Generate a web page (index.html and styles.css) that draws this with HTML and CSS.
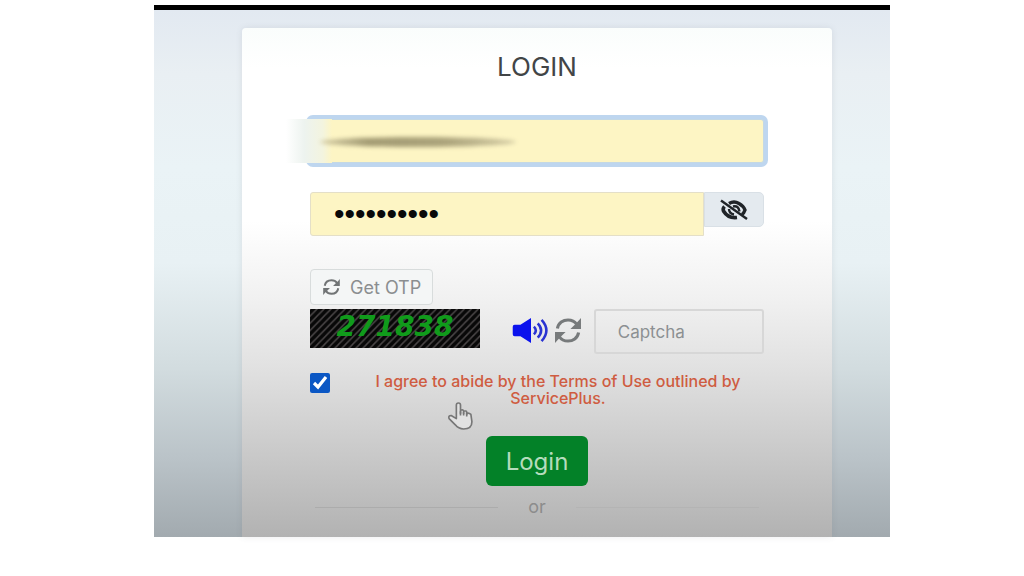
FILE: index.html
```html
<!DOCTYPE html>
<html lang="en">
<head>
<meta charset="utf-8">
<meta name="viewport" content="width=device-width, initial-scale=1">
<title>Login</title>
<link rel="stylesheet" href="styles.css">
</head>
<body>
<svg class="symbols" aria-hidden="true">
  <symbol id="refresh" viewBox="0 0 28 26">
    <path d="M3 11C4 5 9 2 14 2c4 0 7 1.500 9 4.500M25 15c-1 6-6 9-11 9-4 0-7-1.500-9-4.500" fill="none" stroke="currentColor" stroke-width="3.200"/>
    <path d="M27.500 0v11.500H16.500l4-4 4-4zM.500 26V14.500h11l-4 4-4 4z" fill="currentColor"/>
  </symbol>
</svg>
<main class="frame">
  <form class="card">
    <h1 class="title">LOGIN</h1>
    <div class="user-field">
      <input class="field user" type="text" aria-label="User name">
      <span class="fade"></span>
      <span class="smudge"></span>
    </div>
    <div class="password-row">
      <input class="field password" type="password" value="abcdefghij" aria-label="Password">
      <button class="toggle" type="button" aria-label="Show password">
        <svg class="eye" viewBox="0 0 28 22" fill="none" stroke="currentColor">
          <path d="M9 4.500Q14 1.500 19 4.500 23.500 7 25 11q-1 3-3 4.500" stroke-width="3.400"/>
          <path d="M4.500 7.500Q2.500 9.500 3.500 12 8 19.500 17 18.500" stroke-width="3.600"/>
          <path d="M13 7.500q5.500-1.500 6.500 5M9 10q0 4.500 5 5.500" stroke-width="2.400"/>
          <path d="M1 1.500l26 18.500" stroke-width="2.400"/>
        </svg>
      </button>
    </div>
    <button class="otp" type="button"><svg class="otp-icon"><use href="#refresh"/></svg>Get OTP</button>
    <div class="captcha-row">
      <svg class="captcha" viewBox="0 0 170 38" preserveAspectRatio="none" role="img" aria-label="271838">
        <defs><pattern id="hatch" width="7" height="7" patternUnits="userSpaceOnUse"><path d="M-1 1l2-2M0 7l7-7M6 8l2-2" stroke="#4b4748" stroke-width="1.400"/></pattern></defs>
        <rect width="170" height="38" fill="#080808"/>
        <rect width="170" height="38" fill="url(#hatch)"/>
        <text class="digits" x="85" y="26" text-anchor="middle">271838</text>
      </svg>
      <div class="tools">
        <button class="tool" type="button" aria-label="Play captcha">
          <svg class="sound" viewBox="0 0 38 26"><path d="M0 9q0-2 2-2h6l11-7v26L8 19H2q-2 0-2-2z" fill="#0b12ed"/><path d="M22 9q4 4 0 8M26 5.500q7 7.500 0 15M30 2q10 11 0 22" fill="none" stroke="#2933d2" stroke-width="2.600"/></svg>
        </button>
        <button class="tool" type="button" aria-label="New captcha"><svg class="reload"><use href="#refresh"/></svg></button>
      </div>
      <input class="captcha-input" type="text" placeholder="Captcha" aria-label="Captcha">
    </div>
    <div class="terms">
      <input class="check" type="checkbox" id="agree" checked>
      <label class="terms-text" for="agree">I agree to abide by the Terms of Use outlined by ServicePlus.</label>
    </div>
    <button class="login" type="submit">Login</button>
    <div class="divider">or</div>
    <svg class="pointer" viewBox="0 0 24 27" fill="#e2e2e2" stroke="#777" stroke-width="1.600" stroke-linejoin="round" aria-hidden="true"><path d="M8 16V3q0-2 2-2t2 2v8V8q3-1 3 1v2-2q3-1 3 1v2-1q2-1 4 1l1 7q0 7-8 7-5 0-8-4l-6-6q-1-3 2-3z"/><path d="M12 9v4M15 10v3M18 10v4" fill="none"/></svg>
  </form>
</main>
</body>
</html>
```
FILE: styles.css
```css
* { box-sizing: border-box; }

body {
  margin: 0;
  min-height: 100vh;
  padding: 5px 134px 38px 154px;
  background: #fff;
  font-family: "Inter", "Open Sans", sans-serif;
}

button { font-family: inherit; cursor: pointer; }

.symbols { position: absolute; width: 0; height: 0; }

.frame {
  padding: 18px 58px 0 88px;
  border-top: 5px solid #000;
  background: linear-gradient(#e2e9f1 0, #e9eff3 12%, #eaf3f6 30%, #e8f1f4 48%, #d2dcdf 68%, #bac3c8 85%, #a2aaaf 100%);
}

.card {
  position: relative;
  display: flex;
  flex-direction: column;
  padding: 25px 68px 17px;
  border-radius: 4px 4px 0 0;
  background: linear-gradient(#fafdfc 0, #fff 8%, #fff 38%, #f1f1f1 53%, #e2e2e2 66%, #cdcdcd 81%, #b2b2b2 100%);
  box-shadow: 0 0 6px rgba(80, 90, 110, 0.12);
}

.title {
  margin: 0 0 38px;
  color: #424547;
  font-size: 26px;
  font-weight: 400;
  line-height: 28px;
  text-align: center;
}

.user-field { position: relative; }

.field {
  display: block;
  width: 100%;
  height: 44px;
  padding: 0 23px;
  border: 1px solid #e4dfc8;
  border-radius: 3px;
  background: #fdf5c4;
  outline: none;
}

.user {
  border-color: #c4d8e4;
  box-shadow: 0 0 0 4px #bed6ef;
}

.fade {
  position: absolute;
  top: 0;
  left: -24px;
  width: 46px;
  height: 44px;
  background: linear-gradient(90deg, #fff, #edf3ef 40%, #f3f4df 80%, #fdf5c4);
}

.smudge {
  position: absolute;
  top: 18px;
  left: 10px;
  width: 196px;
  height: 10px;
  border-radius: 50%;
  background: linear-gradient(90deg, #d5cda5, #a39b73 25%, #aca47c 65%, #d5cda5);
  filter: blur(2px);
}

.password-row {
  display: flex;
  align-items: flex-start;
  margin-top: 29px;
}

.password {
  flex: 1;
  min-width: 0;
  border-radius: 3px 0 0 3px;
  color: #090909;
  font-family: "Liberation Sans", sans-serif;
  font-size: 30px;
}

.toggle {
  display: grid;
  place-items: center;
  width: 60px;
  height: 35px;
  padding: 0;
  border: 1px solid #d9e0e6;
  border-radius: 0 5px 5px 0;
  background: #e4eaef;
  color: #202428;
}

.eye { width: 28px; height: 22px; }

.otp {
  display: flex;
  align-items: center;
  align-self: flex-start;
  gap: 9px;
  height: 36px;
  margin-top: 33px;
  padding: 0 11px;
  border: 1px solid #d8dcdc;
  border-radius: 4px;
  background: #f4f6f6;
  color: #8b8e90;
  font-size: 18px;
}

.otp-icon { width: 19px; height: 16px; color: #717475; }

.captcha-row {
  display: grid;
  grid-template-columns: 3fr 2fr 3fr;
  align-items: start;
  margin-top: 4px;
}

.captcha { display: block; width: 100%; height: 39px; }

.digits {
  fill: #109b1b;
  font: italic bold 28px "DejaVu Sans", sans-serif;
}

.tools {
  display: flex;
  justify-content: flex-end;
  gap: 4px;
  padding: 9px 12px 0 0;
}

.tool { padding: 0; border: 0; background: none; color: #777a7b; }

.sound { display: block; width: 38px; height: 25px; }
.reload { display: block; width: 28px; height: 25px; }

.captcha-input {
  width: 100%;
  height: 45px;
  padding: 0 22px;
  border: 2px solid #d7d7d7;
  border-radius: 3px;
  background: transparent;
  color: #555;
  font-family: inherit;
  font-size: 17px;
}

.captcha-input::placeholder { color: #8c9092; }

.terms {
  display: flex;
  align-items: flex-start;
  gap: 22px;
  margin-top: 19px;
}

.check {
  width: 20px;
  height: 20px;
  margin: 0;
  accent-color: #0b57c4;
}

.terms-text {
  flex: 1;
  color: #cf5c41;
  font-size: 16px;
  font-weight: 500;
  line-height: 17px;
  text-align: center;
}

.login {
  align-self: center;
  height: 50px;
  margin-top: 29px;
  padding: 0 20px;
  border: 0;
  border-radius: 6px;
  background: #038128;
  color: #b5dcbc;
  font-size: 24px;
  font-weight: 400;
}

.divider {
  display: flex;
  align-items: center;
  gap: 30px;
  margin-top: 8px;
  padding: 0 5px;
  color: #8c8c8c;
  font-size: 18px;
  line-height: 26px;
}

.divider::before,
.divider::after {
  content: "";
  flex: 1;
  height: 1px;
  background: #acacac;
}

.divider::after { background: #b4b4b4; }

.pointer {
  position: absolute;
  top: 374px;
  left: 206px;
  width: 25px;
  height: 28px;
}
```
